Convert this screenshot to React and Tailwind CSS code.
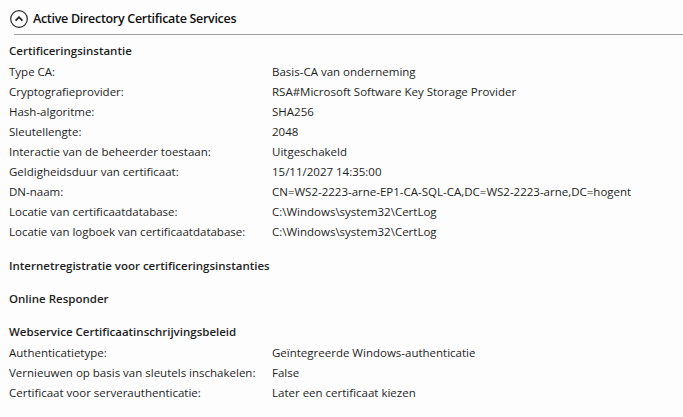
import React from "react";

const caRows = [
  ["Type CA:", "Basis-CA van onderneming"],
  ["Cryptografieprovider:", "RSA#Microsoft Software Key Storage Provider"],
  ["Hash-algoritme:", "SHA256"],
  ["Sleutellengte:", "2048"],
  ["Interactie van de beheerder toestaan:", "Uitgeschakeld"],
  ["Geldigheidsduur van certificaat:", "15/11/2027 14:35:00"],
  ["DN-naam:", "CN=WS2-2223-arne-EP1-CA-SQL-CA,DC=WS2-2223-arne,DC=hogent"],
  ["Locatie van certificaatdatabase:", "C:\\Windows\\system32\\CertLog"],
  ["Locatie van logboek van certificaatdatabase:", "C:\\Windows\\system32\\CertLog"],
];

const policyRows = [
  ["Authenticatietype:", "Geïntegreerde Windows-authenticatie"],
  ["Vernieuwen op basis van sleutels inschakelen:", "False"],
  ["Certificaat voor serverauthenticatie:", "Later een certificaat kiezen"],
];

const Rows = ({ rows }) => (
  <div className="flex flex-col mt-px">
    {rows.map(([label, value]) => (
      <div key={label} className="flex h-5 items-center whitespace-nowrap">
        <span className="w-[263px] shrink-0">{label}</span>
        <span>{value}</span>
      </div>
    ))}
  </div>
);

const App = () => {
  return (
    <div
      className="w-[683px] h-[417px] overflow-hidden bg-[#fdfdfd] text-[#1e1e1e] text-[11.5px]"
      style={{ fontFamily: '"Open Sans", "Noto Sans", sans-serif' }}
    >
      <div className="flex items-center gap-[5px] pl-[10px] pt-[4px] h-[34px]">
        <svg width="18" height="18" viewBox="0 0 18 18">
          <circle cx="9" cy="9" r="8.3" fill="none" stroke="#2b2b2b" strokeWidth="1.2" />
          <path d="M5.6 10.6 L9 7.2 L12.4 10.6" fill="none" stroke="#1e1e1e" strokeWidth="1.7" />
        </svg>
        <span className="text-[12.5px] font-semibold tracking-[-0.3px] text-[#111]">
          Active Directory Certificate Services
        </span>
      </div>
      <div className="ml-[14px] h-px bg-[#a0a0a0]" />

      <div className="pl-[9px] pt-[6px]">
        <div className="font-semibold h-5 flex items-center">Certificeringsinstantie</div>
        <Rows rows={caRows} />

        <div className="font-semibold h-5 flex items-center mt-[14px]">
          Internetregistratie voor certificeringsinstanties
        </div>
        <div className="font-semibold h-5 flex items-center mt-[13px]">Online Responder</div>
        <div className="font-semibold h-5 flex items-center mt-[13px]">
          Webservice Certificaatinschrijvingsbeleid
        </div>
        <Rows rows={policyRows} />
      </div>
    </div>
  );
};

export default App;
